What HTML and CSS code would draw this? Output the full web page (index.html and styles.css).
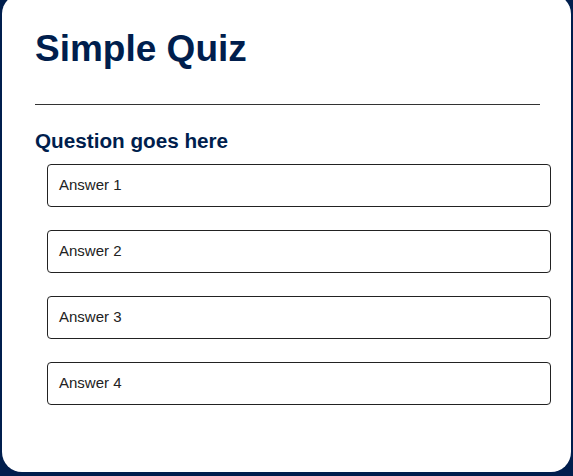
FILE: index.html
```html
<!DOCTYPE html>
<html lang="en">
<head>
<meta charset="utf-8">
<title>Simple Quiz</title>
<link rel="stylesheet" href="styles.css">
</head>
<body>
<div class="app">
  <h1 class="title">Simple Quiz</h1>
  <div class="divider"></div>
  <div class="quiz">
    <h2 class="question">Question goes here</h2>
    <div class="answers">
      <button class="btn">Answer 1</button>
      <button class="btn">Answer 2</button>
      <button class="btn">Answer 3</button>
      <button class="btn">Answer 4</button>
    </div>
  </div>
</div>
</body>
</html>
```
FILE: styles.css
```css
html, body {
  margin: 0;
  padding: 0;
}
body {
  background: #001e4d;
  font-family: "Liberation Sans", Arial, sans-serif;
  height: 476px;
  overflow: hidden;
}
.app {
  box-sizing: border-box;
  margin: -6px 0 0 2px;
  width: 569px;
  height: 478px;
  background: #fff;
  border-radius: 20px;
  padding: 34px 31px 0 33px;
}
.title {
  margin: 0;
  font-size: 37px;
  line-height: 42px;
  font-weight: 700;
  color: #001e4d;
}
.divider {
  margin-top: 34px;
  width: 505px;
  border-top: 1px solid #333;
}
.question {
  margin: 24px 0 0;
  font-size: 20.7px;
  line-height: 24px;
  font-weight: 700;
  color: #001e4d;
}
.answers {
  display: flex;
  flex-direction: column;
  gap: 23px;
  margin: 11px 0 0 12px;
  width: 504px;
}
.btn {
  box-sizing: border-box;
  height: 43px;
  width: 100%;
  background: #fff;
  color: #222;
  border: 1px solid #222;
  border-radius: 4px;
  padding: 0 11px 2px;
  text-align: left;
  font-family: "Liberation Sans", Arial, sans-serif;
  font-size: 15px;
}
```
